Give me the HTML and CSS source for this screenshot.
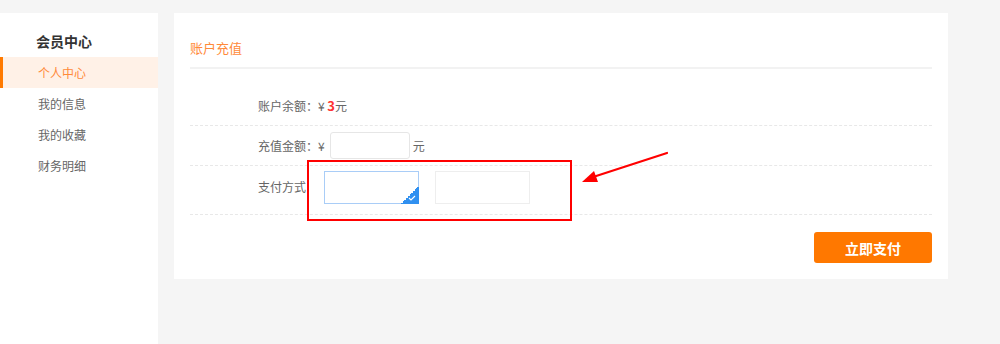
FILE: index.html
```html
<!DOCTYPE html>
<html lang="zh-CN">
<head>
    <meta charset="UTF-8">
    <meta name="viewport" content="width=device-width, initial-scale=1.0">
    <link rel="stylesheet" href="styles.css">
</head>
<body>
    <div class="page">
        <div class="sidebar">
            <div class="side-title">会员中心</div>
            <div class="side-item active">个人中心</div>
            <div class="side-item">我的信息</div>
            <div class="side-item">我的收藏</div>
            <div class="side-item">财务明细</div>
        </div>

        <div class="main-card">
            <div class="card-head">账户充值</div>

            <div class="form">
                <div class="form-row">
                    <span class="label">账户余额：</span>
                    <span class="value">¥ <b class="money">3</b>元</span>
                </div>
                <div class="form-row">
                    <span class="label">充值金额：</span>
                    <span class="value">¥</span>
                    <input class="amount-input" type="text">
                    <span class="value unit">元</span>
                </div>
                <div class="form-row pay-row">
                    <span class="label">支付方式</span>
                    <div class="pay-list">
                        <div class="pay-item selected">
                            <span class="corner">
                                <svg width="8" height="6" viewBox="0 0 8 6"><path d="M1 3 L3 5 L7 1" fill="none" stroke="#fff" stroke-width="1.1"/></svg>
                            </span>
                        </div>
                        <div class="pay-item"></div>
                    </div>
                </div>
            </div>

            <div class="actions">
                <button class="pay-btn">立即支付</button>
            </div>

            <!-- annotation marks -->
            <div class="mark-box"></div>
            <svg class="mark-arrow" width="100" height="40" viewBox="0 0 100 40">
                <line x1="93" y1="6" x2="16" y2="31" stroke="#f00" stroke-width="2.2" stroke-linecap="round"/>
                <polygon points="8,35 20,24 24,35" fill="#f00"/>
            </svg>
        </div>
    </div>
</body>
</html>
```

FILE: styles.css
```css
body {
    margin: 0;
    padding: 0;
    background-color: #f5f5f5;
    font-family: "Microsoft YaHei", "Noto Sans CJK SC", sans-serif;
    font-size: 12px;
    color: #666;
    height: 344px;
    overflow: hidden;
}

.page {
    display: flex;
    align-items: flex-start;
    gap: 16px;
    padding-top: 13px;
}

.sidebar {
    width: 158px;
    height: 331px;
    background: #fff;
}

.side-title {
    padding: 18px 0 6px 36px;
    line-height: 20px;
    font-size: 14px;
    font-weight: bold;
    color: #333;
}

.side-item {
    height: 31px;
    line-height: 31px;
    padding-left: 38px;
    color: #666;
}

.side-item.active {
    background: #fff1e7;
    color: #ff8a3a;
    box-shadow: inset 3px 0 0 #ff7a00;
}

.main-card {
    position: relative;
    width: 774px;
    box-sizing: border-box;
    padding: 0 16px 16px;
    background: #fff;
}

.card-head {
    padding: 24px 0 8px;
    line-height: 22px;
    font-size: 13px;
    color: #ff8a3a;
    border-bottom: 2px solid #f2f2f2;
}

.form {
    margin-top: 17px;
}

.form-row {
    display: flex;
    align-items: center;
    height: 40px;
    padding-left: 68px;
    border-bottom: 1px dashed #e8e8e8;
    box-sizing: border-box;
}

.label {
    width: 60px;
    flex-shrink: 0;
}

.money {
    color: #f33;
    font-size: 13px;
}

.amount-input {
    width: 80px;
    height: 27px;
    box-sizing: border-box;
    margin: 0 3px 0 5px;
    border: 1px solid #e6e6e6;
    border-radius: 3px;
    outline: none;
}

.pay-row {
    height: 49px;
    align-items: flex-start;
    padding-top: 5px;
}

.pay-row .label {
    line-height: 32px;
}

.pay-list {
    display: flex;
    gap: 16px;
    margin-left: 6px;
}

.pay-item {
    position: relative;
    width: 95px;
    height: 33px;
    box-sizing: border-box;
    border: 1px solid #eee;
}

.pay-item.selected {
    border-color: #a9cdf7;
}

.corner {
    position: absolute;
    right: -1px;
    bottom: -1px;
    width: 18px;
    height: 18px;
    background: linear-gradient(135deg, transparent 50%, #3090f0 50%);
}

.corner svg {
    position: absolute;
    right: 3px;
    bottom: 3px;
}

.actions {
    display: flex;
    justify-content: flex-end;
    margin-top: 17px;
}

.pay-btn {
    width: 118px;
    height: 31px;
    border: none;
    border-radius: 3px;
    background: #ff7800;
    color: #fff;
    font-family: inherit;
    font-size: 14px;
    font-weight: bold;
}

.mark-box {
    position: absolute;
    left: 133px;
    top: 147px;
    width: 265px;
    height: 61px;
    box-sizing: border-box;
    border: 2.5px solid #f00;
}

.mark-arrow {
    position: absolute;
    left: 400px;
    top: 134px;
}
```
